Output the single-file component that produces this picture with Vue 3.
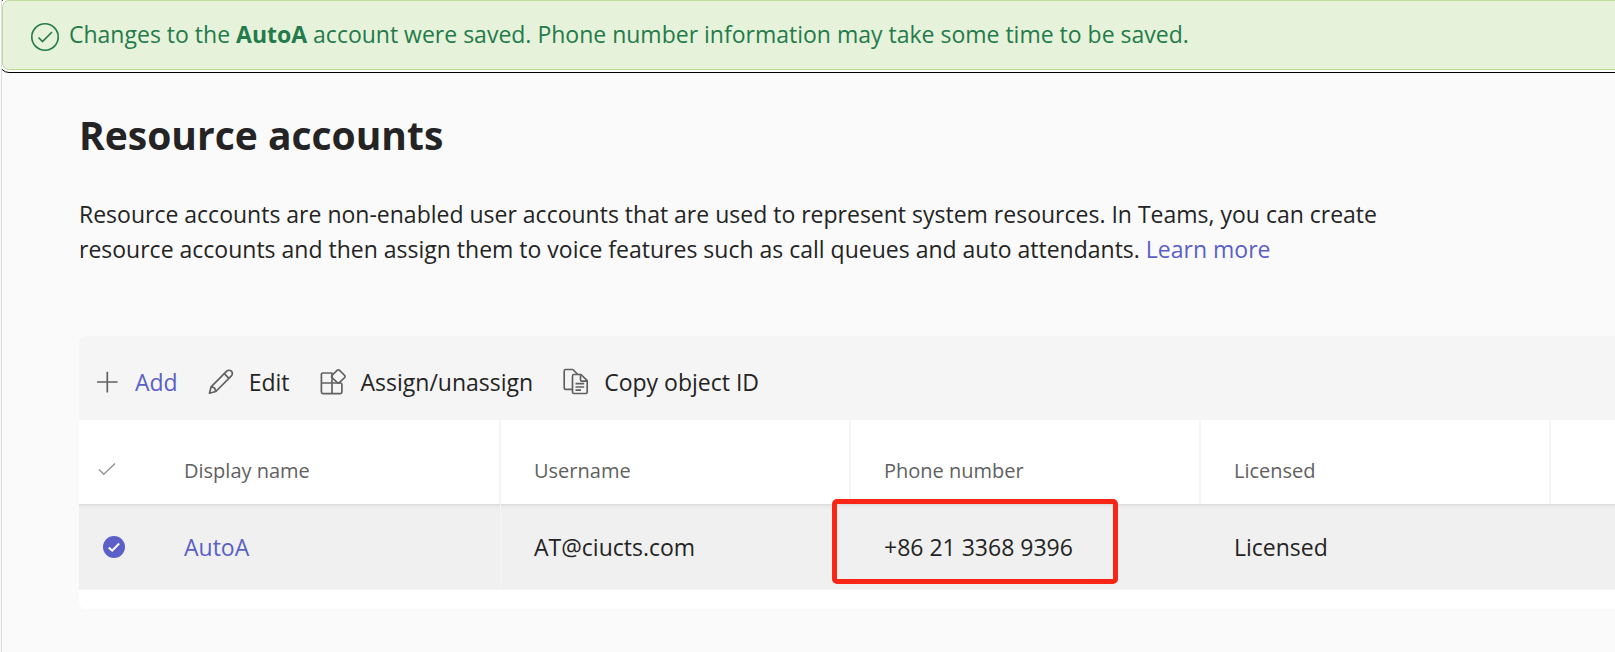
<script setup>
import { ref } from 'vue'

const columns = ['Display name', 'Username', 'Phone number', 'Licensed']
const accounts = ref([
  { name: 'AutoA', username: 'AT@ciucts.com', phone: '+86 21 3368 9396', licensed: 'Licensed', selected: true },
])
const allSelected = ref(false)
</script>

<template>
  <div class="page">
    <div class="banner-wrap">
      <div class="banner" role="status">
        <svg class="banner-icon" viewBox="0 0 28 28" aria-hidden="true">
          <circle cx="14" cy="14" r="13.2" />
          <path d="M7.5 14.5l4 4L21 9" />
        </svg>
        <p class="banner-text">
          Changes to the <strong>AutoA</strong> account were saved. Phone number information may take some time to be saved.
        </p>
      </div>
    </div>

    <main class="content">
      <h1 class="title">Resource accounts</h1>
      <p class="intro">
        Resource accounts are non-enabled user accounts that are used to represent system resources. In Teams, you can create
        resource accounts and then assign them to voice features such as call queues and auto attendants.
        <a href="#">Learn more</a>
      </p>

      <section class="panel">
        <div class="toolbar" role="toolbar" aria-label="Account actions">
          <button type="button" class="tool primary">
            <svg viewBox="0 0 28 28" aria-hidden="true"><path d="M14.3 3.8v20.6M4 14h20.6" /></svg>
            <span>Add</span>
          </button>
          <button type="button" class="tool">
            <svg viewBox="0 0 28 28" aria-hidden="true">
              <path d="M2.5 25.2l1.6-6.4L19.7 3.2a3.3 3.3 0 0 1 4.7 4.7L8.8 23.5z" />
              <path d="M17.3 5.6l4.7 4.7M4.1 18.8c2.6 .2 4.5 2 4.7 4.7" />
            </svg>
            <span>Edit</span>
          </button>
          <button type="button" class="tool">
            <svg viewBox="0 0 28 28" aria-hidden="true">
              <path d="M13 15V5H4a1.6 1.6 0 0 0-1.6 1.6v17.5A1.6 1.6 0 0 0 4 25.7h17.3a1.6 1.6 0 0 0 1.6-1.6V16.6A1.6 1.6 0 0 0 21.3 15H2.4M13 15v10.7" />
              <path d="M18.3 2.2a1.4 1.4 0 0 1 2 0l5.4 5.3a1.4 1.4 0 0 1 0 2L20.3 14.6a1.4 1.4 0 0 1-2 0L13 9.5a1.4 1.4 0 0 1 0-2z" />
            </svg>
            <span>Assign/unassign</span>
          </button>
          <button type="button" class="tool">
            <svg viewBox="0 0 28 28" aria-hidden="true">
              <path d="M10.5 21.3H3.6a1.4 1.4 0 0 1-1.4-1.4V2.9a1.4 1.4 0 0 1 1.4-1.4h7.2l5 5" />
              <path d="M11.9 6.5H19l6.2 6.2v11.4a1.4 1.4 0 0 1-1.4 1.4H11.9a1.4 1.4 0 0 1-1.4-1.4V7.9a1.4 1.4 0 0 1 1.4-1.4z" />
              <path d="M18.5 6.5v5.3a1.4 1.4 0 0 0 1.4 1.4h5.3M13.5 15.7h8.7M13.5 19h8.7M13.5 22.2h5.5" />
            </svg>
            <span>Copy object ID</span>
          </button>
        </div>

        <table class="grid">
          <thead>
            <tr>
              <th class="check-col" scope="col">
                <label class="check head-check">
                  <input v-model="allSelected" type="checkbox" aria-label="Select all accounts" />
                  <svg viewBox="0 0 18 14" aria-hidden="true"><path d="M1 7.5l4.8 4.8L17 1.5" /></svg>
                </label>
              </th>
              <th v-for="column in columns" :key="column" class="data-col" scope="col">{{ column }}</th>
              <th></th>
            </tr>
          </thead>
          <tbody>
            <tr v-for="account in accounts" :key="account.username">
              <td>
                <label class="check row-check">
                  <input v-model="account.selected" type="checkbox" :aria-label="`Select ${account.name}`" />
                  <svg viewBox="0 0 22 22" aria-hidden="true">
                    <circle cx="11" cy="11" r="11" />
                    <path d="M5.8 11.5l3.4 3.2 7-7.2" />
                  </svg>
                </label>
              </td>
              <td class="name"><a href="#">{{ account.name }}</a></td>
              <td>{{ account.username }}</td>
              <td class="phone">{{ account.phone }}<span class="highlight"></span></td>
              <td>{{ account.licensed }}</td>
              <td></td>
            </tr>
          </tbody>
        </table>
      </section>
    </main>
  </div>
</template>

<style>
body {
  margin: 0;
  background: #fafafa;
}
</style>

<style scoped>
.page {
  min-height: 100vh;
  box-sizing: border-box;
  margin-left: 1px;
  border-left: 1px solid #dedede;
  overflow: hidden;
  background: #fafafa;
  color: #242424;
  font-family: "Segoe UI", "Open Sans", "Noto Sans", sans-serif;
  font-size: 23px;
  line-height: 35px;
}

a {
  color: #5b5fc7;
  text-decoration: none;
}

.banner-wrap {
  overflow: hidden;
  padding-bottom: 3px;
}

.banner {
  display: flex;
  align-items: flex-start;
  gap: 10px;
  margin-right: -8px;
  padding: 16px 28px 17px;
  border: 1px solid #bdda9b;
  border-radius: 7px;
  background: #e7f2da;
  box-shadow: 0 0 0 2px #fff;
  outline: 1px solid #000;
  outline-offset: 2px;
  color: #237b4b;
}

.banner-icon {
  flex: none;
  width: 28px;
  height: 28px;
  margin-top: 6px;
  fill: none;
  stroke: currentColor;
  stroke-width: 1.6;
}

.banner-text {
  margin: 0;
}

.content {
  padding: 34px 0 0 77px;
}

.title {
  margin: 0 0 34px;
  font-size: 39px;
  line-height: 56px;
  font-weight: 700;
}

.intro {
  max-width: 1320px;
  margin: 0 0 69px;
}

.panel {
  overflow: hidden;
  padding-bottom: 19px;
  border-radius: 7px 0 0 7px;
  background: #fff;
}

.toolbar {
  display: flex;
  align-items: center;
  gap: 29px;
  height: 84px;
  box-sizing: border-box;
  padding: 7px 14px 0;
  background: #f5f5f5;
}

.tool {
  display: flex;
  align-items: center;
  gap: 14px;
  padding: 0;
  border: 0;
  background: none;
  color: inherit;
  font: inherit;
  white-space: nowrap;
}

.tool.primary {
  color: #5b5fc7;
}

.tool span {
  padding-top: 2px;
}

.tool svg {
  width: 28px;
  height: 28px;
  fill: none;
  stroke: #616161;
  stroke-width: 1.7;
  stroke-linejoin: round;
}

.grid {
  width: 100%;
  table-layout: fixed;
  border-collapse: separate;
  border-spacing: 0;
}

.grid th,
.grid td {
  box-sizing: border-box;
  padding: 0 0 0 33px;
  text-align: left;
  vertical-align: middle;
}

.grid th {
  height: 84px;
  padding-top: 17px;
  background: #fff;
  color: #616161;
  font-size: 20px;
  font-weight: 400;
}

.grid td {
  height: 86px;
  padding-top: 1px;
  border-bottom: 1px solid #f5f5f5;
  background: #f0f0f0;
}

.grid tbody tr:first-child td {
  background: linear-gradient(#dadada, #e8e8e8 2px, #f0f0f0 5px);
}

.grid td.name {
  border-right: 1px solid #f5f5f5;
}

.check-col {
  width: 72px;
}

.data-col {
  width: 350px;
  border-right: 2px solid #f5f5f5;
}

.grid th:first-child {
  padding-top: 13px;
  padding-left: 19px;
}

.grid td:first-child {
  padding-top: 0;
  padding-left: 24px;
}

.check {
  position: relative;
  display: block;
}

.check input {
  position: absolute;
  inset: 0;
  width: 100%;
  height: 100%;
  margin: 0;
  opacity: 0;
}

.check svg {
  display: block;
  fill: none;
}

.head-check,
.head-check svg {
  width: 18px;
  height: 14px;
}

.head-check svg {
  stroke: #949494;
  stroke-width: 1.4;
}

.row-check,
.row-check svg {
  width: 22px;
  height: 22px;
}

.row-check circle {
  fill: #5b5fc7;
}

.row-check path {
  stroke: #fff;
  stroke-width: 2;
}

.phone {
  position: relative;
}

.highlight {
  position: absolute;
  inset: -5px auto 5px -19px;
  width: 286px;
  box-sizing: border-box;
  border: 5px solid #f92516;
  border-radius: 5px;
}
</style>
